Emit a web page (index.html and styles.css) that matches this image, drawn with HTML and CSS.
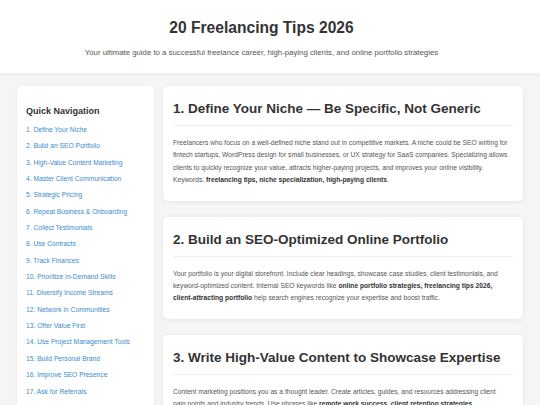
FILE: index.html
```html
<!doctype html>
<html lang="en">
<head>
	<meta charset="UTF-8">
	<title>20 Freelancing Tips 2026</title>
	<link rel="stylesheet" href="styles.css">
</head>
<body>
	<header class="site-header">
		<h1>20 Freelancing Tips 2026</h1>
		<p>Your ultimate guide to a successful freelance career, high-paying clients, and online portfolio strategies</p>
	</header>

	<div class="layout">
		<aside class="toc">
			<h3>Quick Navigation</h3>
			<ul>
				<li><a href="#tip1">1. Define Your Niche</a></li>
				<li><a href="#tip2">2. Build an SEO Portfolio</a></li>
				<li><a href="#tip3">3. High-Value Content Marketing</a></li>
				<li><a href="#tip4">4. Master Client Communication</a></li>
				<li><a href="#tip5">5. Strategic Pricing</a></li>
				<li><a href="#tip6">6. Repeat Business &amp; Onboarding</a></li>
				<li><a href="#tip7">7. Collect Testimonials</a></li>
				<li><a href="#tip8">8. Use Contracts</a></li>
				<li><a href="#tip9">9. Track Finances</a></li>
				<li><a href="#tip10">10. Prioritize In-Demand Skills</a></li>
				<li><a href="#tip11">11. Diversify Income Streams</a></li>
				<li><a href="#tip12">12. Network in Communities</a></li>
				<li><a href="#tip13">13. Offer Value First</a></li>
				<li><a href="#tip14">14. Use Project Management Tools</a></li>
				<li><a href="#tip15">15. Build Personal Brand</a></li>
				<li><a href="#tip16">16. Improve SEO Presence</a></li>
				<li><a href="#tip17">17. Ask for Referrals</a></li>
				<li><a href="#tip18">18. Keep Learning</a></li>
			</ul>
		</aside>

		<main class="tips">
			<section class="tip" id="tip1">
				<h2>1. Define Your Niche — Be Specific, Not Generic</h2>
				<p>Freelancers who focus on a well-defined niche stand out in competitive markets. A niche could be SEO writing for fintech startups, WordPress design for small businesses, or UX strategy for SaaS companies. Specializing allows clients to quickly recognize your value, attracts higher-paying projects, and improves your online visibility. Keywords: <strong>freelancing tips, niche specialization, high-paying clients</strong>.</p>
			</section>

			<section class="tip" id="tip2">
				<h2>2. Build an SEO-Optimized Online Portfolio</h2>
				<p>Your portfolio is your digital storefront. Include clear headings, showcase case studies, client testimonials, and keyword-optimized content. Internal SEO keywords like <strong>online portfolio strategies, freelancing tips 2026, client-attracting portfolio</strong> help search engines recognize your expertise and boost traffic.</p>
			</section>

			<section class="tip" id="tip3">
				<h2>3. Write High-Value Content to Showcase Expertise</h2>
				<p>Content marketing positions you as a thought leader. Create articles, guides, and resources addressing client pain points and industry trends. Use phrases like <strong>remote work success, client retention strategies, entrepreneurship mindset</strong> and <strong>freelance career growth</strong> to attract organic visitors.</p>
			</section>
		</main>
	</div>
</body>
</html>
```

FILE: styles.css
```css
* {
	margin: 0;
	padding: 0;
	box-sizing: border-box;
}

body {
	font-family: "Liberation Sans", Arial, sans-serif;
	background: #f5f5f5;
	color: #333;
}

/* header text sits a little left of centre, as in the original page */
.site-header {
	background: #fff;
	text-align: center;
	padding: 18px 27px 15px 10px;
	box-shadow: 0 1px 4px rgba(0, 0, 0, 0.06);
}

.site-header h1 {
	font-size: 15.6px;
	line-height: 20px;
	color: #333;
}

.site-header p {
	margin-top: 10px;
	font-size: 7.8px;
	line-height: 10px;
	color: #555;
}

.layout {
	display: flex;
	align-items: flex-start;
	gap: 9px;
	padding: 13px 17px;
}

.toc {
	flex: 0 0 137px;
	background: #fff;
	border-radius: 5px;
	padding: 19px 9px;
	box-shadow: 0 1px 4px rgba(0, 0, 0, 0.05);
}

.toc h3 {
	font-size: 9px;
	line-height: 12px;
	color: #333;
	margin-bottom: 8px;
}

.toc ul {
	list-style: none;
}

.toc li {
	font-size: 6.7px;
	line-height: 10px;
	margin-bottom: 6.35px;
}

.toc a {
	color: #3a8ccc;
	text-decoration: none;
}

.tips {
	flex: 1;
	display: flex;
	flex-direction: column;
	gap: 16px;
}

.tip {
	background: #fff;
	border-radius: 5px;
	padding: 13px 10px 14px;
	box-shadow: 0 1px 5px rgba(0, 0, 0, 0.07);
}

.tip h2 {
	font-size: 13.5px;
	line-height: 20px;
	color: #333;
	padding-bottom: 6px;
	border-bottom: 1px solid #eee;
	margin-bottom: 11px;
}

.tip p {
	padding-right: 4px;
	font-size: 6.7px;
	line-height: 12.4px;
	color: #555;
}

.tip strong {
	color: #333;
}
```
